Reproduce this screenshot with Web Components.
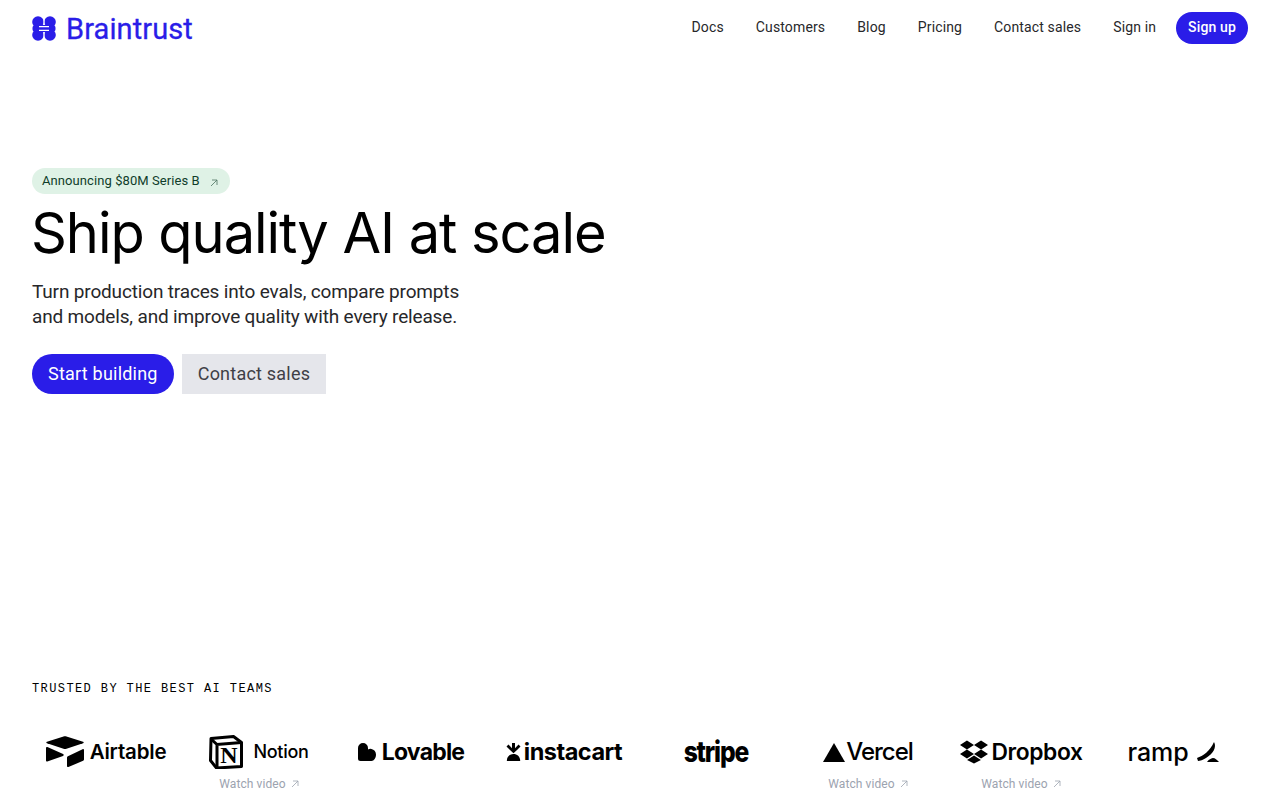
<!DOCTYPE html>
<html lang="en">
<head>
<meta charset="utf-8">
<title>Braintrust</title>
<style>
  html, body { margin: 0; height: 100%; background: #fff; overflow: hidden; }
  body { font-family: Roboto, "Liberation Sans", sans-serif; }
</style>
</head>
<body>
<bt-page>
  <bt-nav slot="nav"></bt-nav>
  <bt-hero slot="hero"></bt-hero>
  <bt-trusted slot="trusted"></bt-trusted>
</bt-page>

<script>
const arrowIcon = `<svg width="8" height="8" viewBox="0 0 8 8" fill="none" stroke="currentColor" stroke-width="0.8"><path d="M1 7 7 1M2 1h5v5"/></svg>`;

class BtPage extends HTMLElement {
  connectedCallback() {
    const shadow = this.attachShadow({ mode: 'open' });
    shadow.innerHTML = `
      <style>
        :host { display: flex; flex-direction: column; height: 800px; box-sizing: border-box; }
        main { flex: 1; }
      </style>
      <slot name="nav"></slot>
      <main><slot name="hero"></slot></main>
      <slot name="trusted"></slot>`;
  }
}

class BtNav extends HTMLElement {
  connectedCallback() {
    const shadow = this.attachShadow({ mode: 'open' });
    const links = ['Docs', 'Customers', 'Blog', 'Pricing', 'Contact sales'];
    shadow.innerHTML = `
      <style>
        :host { display: flex; align-items: center; justify-content: space-between; height: 56px; padding: 0 32px; box-sizing: border-box; }
        .brand { display: flex; align-items: center; gap: 10px; color: #2a1de8; font-size: 29px; line-height: 32px; letter-spacing: 0.1px; margin-top: 1px; -webkit-text-stroke: 0.3px #2a1de8; }
        .brand svg { display: block; }
        nav { display: flex; align-items: center; font-size: 14px; color: #27272a; letter-spacing: 0.14px; }
        a { padding: 0 16px; line-height: 30px; height: 32px; }
        a.in { padding: 0 20px 0 16px; }
        a.up { padding: 0 12px; line-height: 31px; background: #2a1de8; color: #fff; border-radius: 16px; font-weight: 500; }
      </style>
      <div class="brand">
        <svg width="24" height="25" viewBox="0 0 24 25" fill="#2a1de8">
          <circle cx="6" cy="6" r="5.8"/><circle cx="18" cy="6" r="5.8"/>
          <circle cx="6" cy="19" r="5.8"/><circle cx="18" cy="19" r="5.8"/>
          <rect x="0.500" y="9" width="23" height="7" rx="3"/>
          <path d="M12 0v8.500M12 16.500v8.500M7 10.700h10M7 14.300h10" stroke="#fff" stroke-width="1.200" fill="none"/>
        </svg>
        <span>Braintrust</span>
      </div>
      <nav>
        ${links.map(l => `<a>${l}</a>`).join('')}
        <a class="in">Sign in</a>
        <a class="up">Sign up</a>
      </nav>`;
  }
}

class BtBadge extends HTMLElement {
  connectedCallback() {
    const shadow = this.attachShadow({ mode: 'open' });
    shadow.innerHTML = `
      <style>
        :host { display: inline-flex; align-items: center; height: 26px; padding: 0 12px 0 10px; gap: 10px; box-sizing: border-box; border-radius: 13px; background: #dff2e6; color: #0f3d2a; font-size: 13px; letter-spacing: 0.08px; line-height: 24px; }
        svg { margin-top: 3px; opacity: .7; }
        span { margin-top: -1px; }
      </style>
      <span><slot></slot></span>${arrowIcon}`;
  }
}

class BtButton extends HTMLElement {
  connectedCallback() {
    const shadow = this.attachShadow({ mode: 'open' });
    shadow.innerHTML = `
      <style>
        :host { display: inline-flex; align-items: center; height: 40px; padding: 0 16px; box-sizing: border-box; font-size: 18px; letter-spacing: 0.22px; background: #e5e6eb; color: #3f3f46; }
        :host([primary]) { background: #2a1de8; color: #fff; border-radius: 20px; }
        span { margin-top: -1px; }
      </style>
      <span><slot></slot></span>`;
  }
}

class BtHero extends HTMLElement {
  connectedCallback() {
    const shadow = this.attachShadow({ mode: 'open' });
    shadow.innerHTML = `
      <style>
        :host { display: flex; flex-direction: column; align-items: flex-start; padding: 112px 32px 0; }
        h1 { margin: 7px 0 0 -1px; font-family: Inter, Roboto, sans-serif; font-size: 56px; line-height: 64px; font-weight: 400; color: #000; letter-spacing: -1.06px; }
        p { margin: 14px 0 0; font-size: 19px; line-height: 25px; color: #27272a; letter-spacing: -0.16px; }
        .actions { display: flex; gap: 8px; margin-top: 25px; }
      </style>
      <bt-badge>Announcing $80M Series B</bt-badge>
      <h1>Ship quality AI at scale</h1>
      <p>Turn production traces into evals, compare prompts<br>and models, and improve quality with every release.</p>
      <div class="actions">
        <bt-button primary>Start building</bt-button>
        <bt-button>Contact sales</bt-button>
      </div>`;
  }
}

class BtCustomer extends HTMLElement {
  connectedCallback() {
    const shadow = this.attachShadow({ mode: 'open' });
    const watch = this.hasAttribute('watch')
      ? `<div class="watch">Watch video ${arrowIcon}</div>` : '';
    shadow.innerHTML = `
      <style>
        :host { display: block; height: 72px; font-family: Inter, "Liberation Sans", sans-serif; }
        .logo { display: flex; align-items: center; justify-content: center; gap: var(--gap, 8px); height: 48px; color: #000; }
        .watch { display: flex; align-items: center; justify-content: center; gap: 5px; color: #9ca3af; font: 12px/16px Roboto, sans-serif; letter-spacing: .1px; }
        ::slotted(svg) { display: block; }
      </style>
      <div class="logo"><slot></slot></div>
      ${watch}`;
  }
}

class BtTrusted extends HTMLElement {
  connectedCallback() {
    const shadow = this.attachShadow({ mode: 'open' });
    shadow.innerHTML = `
      <style>
        :host { display: block; padding: 0 32px; }
        h2 { margin: 0 0 31px; font: 400 12px/16px "Liberation Mono", monospace; letter-spacing: 1.4px; color: #000; }
        .grid { display: grid; grid-template-columns: repeat(8, 1fr); }
        span { font-weight: 600; line-height: 28px; }
      </style>
      <h2>TRUSTED BY THE BEST AI TEAMS</h2>
      <div class="grid">
        <bt-customer style="--gap:6px;padding-right:4px">
          <svg width="38" height="32" viewBox="0 0 38 32"><path d="M17.500.4 1 5.700c-.9.300-.9 1.300 0 1.600l16.500 5.400c1 .3 2 .3 3 0L37 7.300c.9-.3.900-1.300 0-1.600L20.500.4c-1-.3-2-.3-3 0z"/><path d="M21 21.500V30c0 .8.700 1.300 1.400 1l14.700-6.200c.5-.2.900-.7.900-1.200V14.200c0-.8-.7-1.300-1.400-1L21.900 20.200c-.5.200-.9.700-.9 1.300z"/><path d="M0 12v12.500c0 .7.700 1.100 1.300.9L17 20c.9-.3 1-1.500.1-1.900L1.400 11C.7 10.700 0 11.200 0 12z"/></svg>
          <span style="font-size:20.500px;letter-spacing:-.2px">Airtable</span>
        </bt-customer>
        <bt-customer watch style="--gap:10px;padding-right:2px">
          <svg width="34" height="34" viewBox="0 0 34 34"><path d="M2 3.500 24.500 1.500 32.500 7.500V31.500L7.500 33 1.500 25.500Z" fill="#fff" stroke="#000" stroke-width="3" stroke-linejoin="round"/><path d="M2 4 8 9.500 32.500 7.500M8 9.500V32.500" fill="none" stroke="#000" stroke-width="3"/><text x="20" y="28" font-family="Liberation Serif" font-weight="700" font-size="24" text-anchor="middle">N</text></svg>
          <span style="font-size:18px;font-weight:500;letter-spacing:-.3px">Notion</span>
        </bt-customer>
        <bt-customer style="--gap:6px;padding-right:2px">
          <svg width="18" height="18" viewBox="0 0 18 18"><path d="M0 5a5 5 0 0 1 10 0v1.500a4.700 4.700 0 0 1 3.500-.500C16 6.500 18 8.500 18 11.500c0 3.500-2 6.500-4.500 6.500H2.500A2.500 2.500 0 0 1 0 15.500Z"/></svg>
          <span style="font-size:23px;font-weight:700;letter-spacing:-.8px">Lovable</span>
        </bt-customer>
        <bt-customer style="--gap:3px">
          <svg width="15" height="18" viewBox="0 0 15 18"><path d="M7.500 18H.8C.8 13.500 4 11 7.500 11s6.700 2.500 6.700 7Z"/><path d="M6 0h3v5.200L12.500 1.500l2 2L11 7l-3.500 3.200L4 7 .5 3.500l2-2L6 5.200Z"/></svg>
          <span style="font-size:23.500px;font-weight:700;letter-spacing:-.5px">instacart</span>
        </bt-customer>
        <bt-customer>
          <span style="display:inline-block;font-size:29px;font-weight:800;letter-spacing:-1.400px;transform:scaleX(.85)">stripe</span>
        </bt-customer>
        <bt-customer watch style="--gap:1px">
          <svg width="22" height="19" viewBox="0 0 22 19"><path d="M11 0 22 19H0Z"/></svg>
          <span style="font-size:24px;font-weight:500;letter-spacing:-1px">Vercel</span>
        </bt-customer>
        <bt-customer watch style="--gap:4px;padding-left:2px">
          <svg width="28" height="24" viewBox="0 0 29 24"><path d="M7.200 0 14.500 4.700 7.200 9.400 0 4.700ZM21.800 0 29 4.700 21.800 9.400 14.500 4.700ZM0 14.100 7.200 9.400 14.500 14.100 7.200 18.800ZM21.800 9.400 29 14.100 21.800 18.800 14.500 14.100ZM7.300 20.300 14.500 15.600 21.700 20.300 14.500 24Z"/></svg>
          <span style="font-size:22.800px;font-weight:600;letter-spacing:-.4px">Dropbox</span>
        </bt-customer>
        <bt-customer style="--gap:8px;padding-left:2px">
          <span style="font-size:25px;font-weight:500;letter-spacing:-.1px">ramp</span>
          <svg width="22" height="22" viewBox="0 0 22 22"><path d="M17 1C20 6 16 13 9 17 6 19 3 20 1 20L0 17C6 15 13 10 17 1Z"/><path d="M10 21C12 18 15 17 16 17 18 17 20 19 22 21Z"/></svg>
        </bt-customer>
      </div>`;
  }
}

customElements.define('bt-page', BtPage);
customElements.define('bt-nav', BtNav);
customElements.define('bt-badge', BtBadge);
customElements.define('bt-button', BtButton);
customElements.define('bt-hero', BtHero);
customElements.define('bt-customer', BtCustomer);
customElements.define('bt-trusted', BtTrusted);
</script>
</body>
</html>
